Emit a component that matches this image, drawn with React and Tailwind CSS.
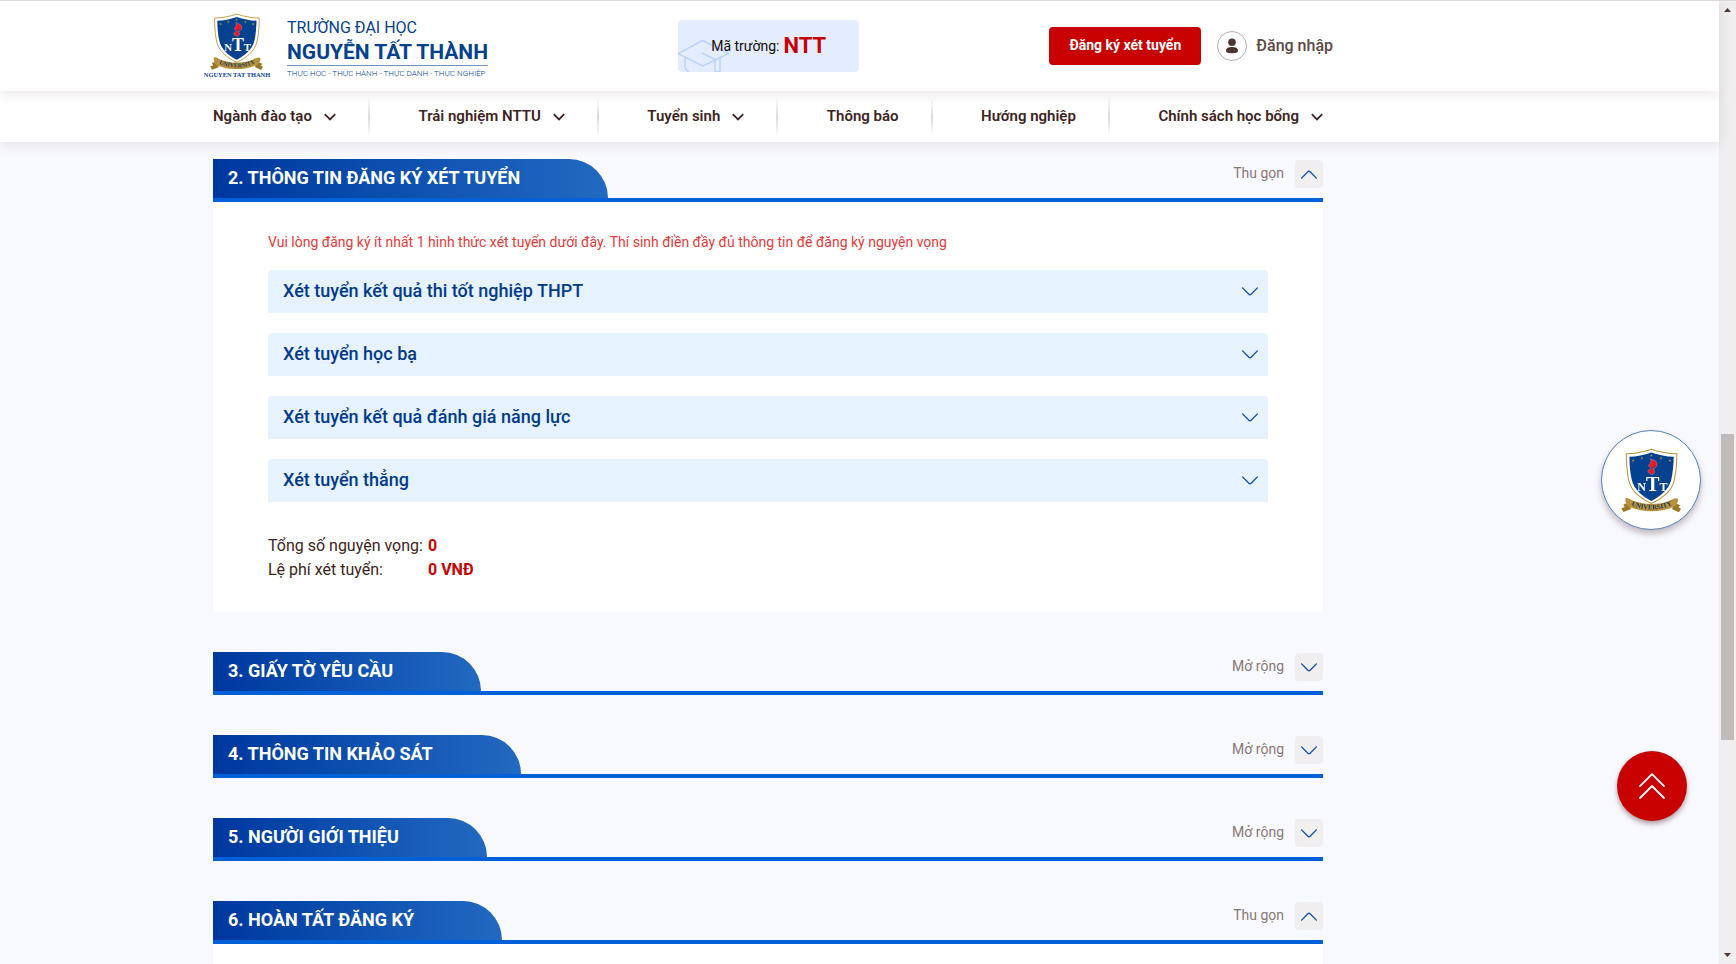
import React from "react";

const NAV = [
  { label: "Ngành đào tạo", menu: true },
  { label: "Trải nghiệm NTTU", menu: true },
  { label: "Tuyển sinh", menu: true },
  { label: "Thông báo", menu: false },
  { label: "Hướng nghiệp", menu: false },
  { label: "Chính sách học bổng", menu: true },
];

const METHODS = [
  "Xét tuyển kết quả thi tốt nghiệp THPT",
  "Xét tuyển học bạ",
  "Xét tuyển kết quả đánh giá năng lực",
  "Xét tuyển thẳng",
];

function Star({ x, y }) {
  return (
    <path
      transform={`translate(${x} ${y})`}
      fill="#b8923a"
      d="M0-4.5 1.2-1.4 4.5-1.3 1.9.8 2.8 4 0 2.1-2.8 4-1.9.8-4.5-1.3-1.2-1.4Z"
    />
  );
}

function Crest({ className, ribbonId, caption }) {
  return (
    <svg viewBox={caption ? "98 115 228 218" : "121 115 181 190"} className={className} aria-hidden="true">
      <path
        d="M211 118.500C186 127 162 131.500 136.500 132C137 152 138 186 144.500 213C152 244 182 268 211 280C240 268 271 244 278.500 213C285 186 286.500 152 287 132C261 131.500 236 127 211 118.500Z"
        fill="#fff"
        stroke="#b8923a"
        strokeWidth="3"
      />
      <path
        d="M211 128C188 135.500 168 140 146 141C146 162 148 190 153 210C160 238 186 260 211 272C236 260 263 238 270 210C275 190 277 162 277.500 141C255 140 234 135.500 211 128Z"
        fill="#04418f"
      />
      <Star x={157} y={152} />
      <Star x={183} y={145} />
      <Star x={211} y={137} />
      <Star x={240} y={145} />
      <Star x={266} y={152} />
      <path
        d="M208 147C216 150 229 153 228 165C227 171 221 176 216 178C220 181 222 183 220 187C218 191 215 193 213 195C210 191 202 190 201 185C201 180 206 177 210 175C204 172 202 168 205 163C208 159 213 156 208 147Z"
        fill="#f01822"
        stroke="#8fa5d2"
        strokeWidth="1.500"
      />
      <path d="M204 177C210 174 218 173 226 167" fill="none" stroke="#04418f" strokeWidth="2" />
      <text x="214" y="242" fill="#fff" fontFamily="Liberation Serif, serif" fontWeight="700" textAnchor="middle" fontSize="36">
        N<tspan fontSize="60">T</tspan>T
      </text>
      <path d="M147 276 128 283 132 291 122 294 128 305 150 297ZM276 276 298 286 291 290 299 295 293 306 273 297Z" fill="#9a7725" />
      <path
        d="M134 264C142 261 148 267 155 271C190 285 234 285 268 270C276 266 283 261 291 266C291 273 288 280 282 288C240 308 184 308 142 289C136 281 133 273 134 264Z"
        fill="#b8923a"
      />
      <path id={ribbonId} d="M138 278C184 304 240 304 287 277" fill="none" />
      <text fontFamily="Liberation Serif, serif" fontWeight="700" fontSize="20" fill="#12355f" textAnchor="middle">
        <textPath href={`#${ribbonId}`} startOffset="50%">UNIVERSITY</textPath>
      </text>
      {caption && (
        <text x="212" y="329" fontFamily="Liberation Serif, serif" fontWeight="700" fontSize="21.500" fill="#0b4290" textAnchor="middle">
          {caption}
        </text>
      )}
    </svg>
  );
}

function NavChevron() {
  return (
    <svg viewBox="0 0 12 8" className="h-2 w-3 shrink-0" fill="none" stroke="#3d2422" strokeWidth="1.800" aria-hidden="true">
      <path d="M.8 1.200 6 6.400 11.200 1.200" />
    </svg>
  );
}

function Chevron({ up }) {
  return (
    <svg
      viewBox="0 0 16 9"
      className={up ? "h-[9px] w-4 rotate-180" : "h-[9px] w-4"}
      fill="none"
      stroke="#0b4cb3"
      strokeWidth="1.300"
      strokeLinecap="round"
      aria-hidden="true"
    >
      <path d="M.6.9 6.900 7.200Q8 8.200 9.100 7.200L15.400.9" />
    </svg>
  );
}

function Section({ title, open, children }) {
  return (
    <section>
      <div className="flex h-[43px] items-start justify-between border-b-4 border-[#0060d8]">
        <h2 className="h-[39px] rounded-tr-[39px] bg-linear-to-r from-[#00379f] to-[#2269c1] pr-[88px] pl-[15px] text-[18px] leading-[37px] font-bold text-white">
          {title}
        </h2>
        <button type="button" aria-expanded={open} className="mt-px flex items-center gap-[11px] text-[14px] text-[#8a7673]">
          <span className="pb-0.5">{open ? "Thu gọn" : "Mở rộng"}</span>
          <span className="flex size-7 items-center justify-center rounded bg-[#f0eeee]">
            <Chevron up={open} />
          </span>
        </button>
      </div>
      {open && <div className="bg-white px-[55px] pt-7 pb-[30px]">{children}</div>}
    </section>
  );
}

function Header() {
  return (
    <header className="relative z-20 h-[91px] border-t border-[#dcd6d7] bg-white shadow-[0_3px_12px_rgba(70,30,30,0.11)]">
      <div className="ml-[203px] flex h-full max-w-[1130px] justify-between">
        <a href="#" className="flex gap-4 pt-3">
          <Crest className="h-[65px] w-[68px]" ribbonId="ribbon-header" caption="NGUYEN TAT THANH" />
          <span className="flex flex-col pt-px whitespace-nowrap text-[#04418f]">
            <span className="text-[16px] leading-[28px]">TRƯỜNG ĐẠI HỌC</span>
            <span className="border-b border-[#6d93c4] pb-[3px] text-[21px] leading-[20px] font-bold">NGUYỄN TẤT THÀNH</span>
            <span className="text-[8px] leading-[15px] font-light">THỰC HỌC - THỰC HÀNH - THỰC DANH - THỰC NGHIỆP</span>
          </span>
        </a>

        <div className="relative mt-[19px] flex h-[52px] w-[181px] items-center justify-center gap-1 overflow-hidden rounded bg-[#e3edff]">
          <svg viewBox="0 0 52 34" className="absolute bottom-0 left-0 h-[34px] w-[52px]" fill="none" stroke="#bbd3fc" strokeWidth="1.500" strokeLinejoin="round" aria-hidden="true">
            <path d="M0 15.500 24.500 2.500 50.500 15.500 25 28ZM24 15 37 21.500V34M42 20V33Q39 35 37 33M7 20V28Q7 32 11 34" />
          </svg>
          <span className="relative text-[14px] text-[#150b0b]">Mã trường:</span>
          <strong className="relative text-[22px] leading-none font-bold text-[#c80000]">NTT</strong>
        </div>

        <div className="flex items-start pt-[26px]">
          <button type="button" className="h-[38px] w-[152px] rounded bg-[#c80000] pb-0.5 text-[14px] font-bold whitespace-nowrap text-white">
            Đăng ký xét tuyển
          </button>
          <a href="#" className="ml-4 flex items-center gap-[9px] pt-1 text-[16px] font-medium whitespace-nowrap text-[#5c4744]">
            <span className="flex size-[30px] items-center justify-center rounded-full border border-[#b5abab]">
              <svg viewBox="0 0 12 16" className="h-4 w-3" fill="#4c3431" aria-hidden="true">
                <circle cx="6" cy="4.200" r="3.800" />
                <path d="M0 12.800C0 10 2.500 9 6 9S12 10 12 12.800C12 15 9.500 15.200 6 15.200S0 15 0 12.800Z" />
              </svg>
            </span>
            Đăng nhập
          </a>
        </div>
      </div>
    </header>
  );
}

function Nav() {
  return (
    <nav className="relative z-10 h-[51px] bg-white shadow-[0_3px_12px_rgba(70,30,30,0.11)]">
      <ul className="ml-[213px] flex h-full max-w-[1110px] items-center justify-between">
        {NAV.map((item, i) => (
          <li key={item.label} className="flex items-center gap-8">
            <a href="#" className="flex items-center gap-3 text-[15px] font-semibold whitespace-nowrap text-[#3d2422]">
              {item.label}
              {item.menu && <NavChevron />}
            </a>
            {i < NAV.length - 1 && <span className="h-10 w-0.5 bg-linear-to-b from-transparent via-[#dedada] to-transparent" />}
          </li>
        ))}
      </ul>
    </nav>
  );
}

export default function App() {
  return (
    <div className="flex h-screen overflow-hidden bg-[#f8f9ff] font-[Roboto,sans-serif] text-[#3d2422]">
      <div className="min-w-0 flex-1">
        <Header />
        <Nav />
        <main className="ml-[213px] flex max-w-[1110px] flex-col gap-10 pt-[17px]">
          <Section title="2. THÔNG TIN ĐĂNG KÝ XÉT TUYỂN" open>
            <p className="text-[14px] leading-[24px] text-[#e53a3a]">
              Vui lòng đăng ký ít nhất 1 hình thức xét tuyển dưới đây. Thí sinh điền đầy đủ thông tin để đăng ký nguyện vọng
            </p>
            <div className="mt-4 flex flex-col gap-5">
              {METHODS.map((name) => (
                <button
                  key={name}
                  type="button"
                  className="flex h-[43px] items-center justify-between rounded-t bg-[#e6f2ff] pr-[10px] pl-[15px] text-left text-[18px] font-medium text-[#003a8c]"
                >
                  <span className="pb-0.5">{name}</span>
                  <Chevron />
                </button>
              ))}
            </div>
            <dl className="mt-8 grid grid-cols-[160px_1fr] text-[16px] leading-[24px]">
              <dt className="whitespace-nowrap">Tổng số nguyện vọng:</dt>
              <dd className="font-bold text-[#c80000]">0</dd>
              <dt>Lệ phí xét tuyển:</dt>
              <dd className="font-bold text-[#c80000]">0 VNĐ</dd>
            </dl>
          </Section>
          <Section title="3. GIẤY TỜ YÊU CẦU" open={false} />
          <Section title="4. THÔNG TIN KHẢO SÁT" open={false} />
          <Section title="5. NGƯỜI GIỚI THIỆU" open={false} />
          <Section title="6. HOÀN TẤT ĐĂNG KÝ" open />
        </main>
      </div>

      <a
        href="#"
        aria-label="NTT"
        className="fixed top-[430px] right-[35px] z-30 flex size-[100px] items-center justify-center rounded-full border border-[#4f7fbe] bg-white shadow-[0_4px_6px_rgba(60,20,20,0.28)]"
      >
        <Crest className="h-16 w-[61px]" ribbonId="ribbon-float" />
      </a>
      <button
        type="button"
        aria-label="Lên đầu trang"
        className="fixed right-[49px] bottom-[143px] z-30 flex size-[70px] items-center justify-center rounded-full bg-[#c80000] shadow-[0_3px_5px_rgba(60,20,20,0.4)]"
      >
        <svg viewBox="0 0 26 26" className="size-[26px]" fill="none" stroke="#fff" strokeWidth="1.800" strokeLinecap="round" strokeLinejoin="round" aria-hidden="true">
          <path d="M1 13.200 13 1.200 25 13.200M1 25 13 13 25 25" />
        </svg>
      </button>

      <div className="flex w-[17px] shrink-0 flex-col items-center border-t border-[#dcd6d7] bg-[#f0eeef] pt-[7px] pb-[7px]" aria-hidden="true">
        <svg viewBox="0 0 7 4" className="h-1 w-[7px]" fill="#503836">
          <path d="M0 4 3.500 0 7 4Z" />
        </svg>
        <span className="grow-[422]" />
        <span className="w-[13px] grow-[305] bg-[#c1bbba]" />
        <span className="grow-[213]" />
        <svg viewBox="0 0 7 4" className="h-1 w-[7px]" fill="#503836">
          <path d="M0 0 3.500 4 7 0Z" />
        </svg>
      </div>
    </div>
  );
}
